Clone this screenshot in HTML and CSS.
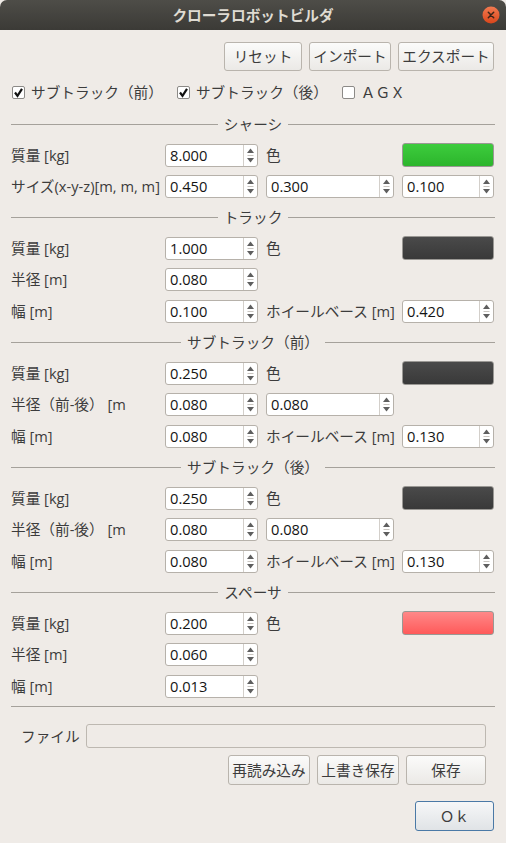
FILE: index.html
```html
<!DOCTYPE html>
<html lang="ja">
<head>
<meta charset="utf-8">
<title>クローラロボットビルダ</title>
<link rel="stylesheet" href="styles.css">
</head>
<body>
<div class="window">
  <div class="titlebar">
    <span></span>
    <span class="title">クローラロボットビルダ</span>
    <span class="close"><svg width="18" height="18" viewBox="0 0 18 18"><defs><linearGradient id="cg" x1="0" y1="0" x2="0" y2="1"><stop offset="0" stop-color="#f27a50"/><stop offset="1" stop-color="#d9461b"/></linearGradient></defs><circle cx="9" cy="9" r="8.5" fill="url(#cg)"/><path d="M6.3 6.3 L11.7 11.7 M11.7 6.3 L6.3 11.7" stroke="#3a2418" stroke-width="1.5" stroke-linecap="round"/></svg></span>
  </div>
  <div class="content">
    <div class="toolbar">
      <button class="btn b-reset">リセット</button>
      <button class="btn b-import">インポート</button>
      <button class="btn b-export">エクスポート</button>
    </div>
    <div class="checks">
      <label class="check"><span class="box"><svg width="11" height="11" viewBox="0 0 11 11"><path d="M2 5.5 L4.5 8.8 L9 1.8" fill="none" stroke="#111" stroke-width="2.2"/></svg></span>サブトラック（前）</label>
      <label class="check"><span class="box"><svg width="11" height="11" viewBox="0 0 11 11"><path d="M2 5.5 L4.5 8.8 L9 1.8" fill="none" stroke="#111" stroke-width="2.2"/></svg></span>サブトラック（後）</label>
      <label class="check"><span class="box"></span>ＡＧＸ</label>
    </div>

    <div class="form">
      <div class="sep"><span class="line"></span><span class="sep-title">シャーシ</span><span class="line"></span></div>
      <div class="row">
        <span class="lbl">質量 [kg]</span>
        <div class="spin"><span class="val">8.000</span><span class="arrows"><svg width="13" height="21" viewBox="0 0 13 21"><polygon points="3,8 10,8 6.5,3.5" fill="#5e5e5e"/><path d="M3.5 10.5 H9.5" stroke="#c9c5c0" stroke-width="1"/><polygon points="3,13 10,13 6.5,17.5" fill="#5e5e5e"/></svg></span></div>
        <span class="lbl">色</span>
        <div class="swatch green"></div>
      </div>
      <div class="row">
        <span class="lbl">サイズ(x-y-z)[m, m, m]</span>
        <div class="spin"><span class="val">0.450</span><span class="arrows"><svg width="13" height="21" viewBox="0 0 13 21"><polygon points="3,8 10,8 6.5,3.5" fill="#5e5e5e"/><path d="M3.5 10.5 H9.5" stroke="#c9c5c0" stroke-width="1"/><polygon points="3,13 10,13 6.5,17.5" fill="#5e5e5e"/></svg></span></div>
        <div class="spin"><span class="val">0.300</span><span class="arrows"><svg width="13" height="21" viewBox="0 0 13 21"><polygon points="3,8 10,8 6.5,3.5" fill="#5e5e5e"/><path d="M3.5 10.5 H9.5" stroke="#c9c5c0" stroke-width="1"/><polygon points="3,13 10,13 6.5,17.5" fill="#5e5e5e"/></svg></span></div>
        <div class="spin"><span class="val">0.100</span><span class="arrows"><svg width="13" height="21" viewBox="0 0 13 21"><polygon points="3,8 10,8 6.5,3.5" fill="#5e5e5e"/><path d="M3.5 10.5 H9.5" stroke="#c9c5c0" stroke-width="1"/><polygon points="3,13 10,13 6.5,17.5" fill="#5e5e5e"/></svg></span></div>
      </div>

      <div class="sep"><span class="line"></span><span class="sep-title">トラック</span><span class="line"></span></div>
      <div class="row">
        <span class="lbl">質量 [kg]</span>
        <div class="spin"><span class="val">1.000</span><span class="arrows"><svg width="13" height="21" viewBox="0 0 13 21"><polygon points="3,8 10,8 6.5,3.5" fill="#5e5e5e"/><path d="M3.5 10.5 H9.5" stroke="#c9c5c0" stroke-width="1"/><polygon points="3,13 10,13 6.5,17.5" fill="#5e5e5e"/></svg></span></div>
        <span class="lbl">色</span>
        <div class="swatch dark"></div>
      </div>
      <div class="row">
        <span class="lbl">半径 [m]</span>
        <div class="spin"><span class="val">0.080</span><span class="arrows"><svg width="13" height="21" viewBox="0 0 13 21"><polygon points="3,8 10,8 6.5,3.5" fill="#5e5e5e"/><path d="M3.5 10.5 H9.5" stroke="#c9c5c0" stroke-width="1"/><polygon points="3,13 10,13 6.5,17.5" fill="#5e5e5e"/></svg></span></div>
      </div>
      <div class="row">
        <span class="lbl">幅 [m]</span>
        <div class="spin"><span class="val">0.100</span><span class="arrows"><svg width="13" height="21" viewBox="0 0 13 21"><polygon points="3,8 10,8 6.5,3.5" fill="#5e5e5e"/><path d="M3.5 10.5 H9.5" stroke="#c9c5c0" stroke-width="1"/><polygon points="3,13 10,13 6.5,17.5" fill="#5e5e5e"/></svg></span></div>
        <span class="lbl">ホイールベース [m]</span>
        <div class="spin"><span class="val">0.420</span><span class="arrows"><svg width="13" height="21" viewBox="0 0 13 21"><polygon points="3,8 10,8 6.5,3.5" fill="#5e5e5e"/><path d="M3.5 10.5 H9.5" stroke="#c9c5c0" stroke-width="1"/><polygon points="3,13 10,13 6.5,17.5" fill="#5e5e5e"/></svg></span></div>
      </div>

      <div class="sep"><span class="line"></span><span class="sep-title">サブトラック（前）</span><span class="line"></span></div>
      <div class="row">
        <span class="lbl">質量 [kg]</span>
        <div class="spin"><span class="val">0.250</span><span class="arrows"><svg width="13" height="21" viewBox="0 0 13 21"><polygon points="3,8 10,8 6.5,3.5" fill="#5e5e5e"/><path d="M3.5 10.5 H9.5" stroke="#c9c5c0" stroke-width="1"/><polygon points="3,13 10,13 6.5,17.5" fill="#5e5e5e"/></svg></span></div>
        <span class="lbl">色</span>
        <div class="swatch dark"></div>
      </div>
      <div class="row">
        <span class="lbl">半径（前-後） [m</span>
        <div class="spin"><span class="val">0.080</span><span class="arrows"><svg width="13" height="21" viewBox="0 0 13 21"><polygon points="3,8 10,8 6.5,3.5" fill="#5e5e5e"/><path d="M3.5 10.5 H9.5" stroke="#c9c5c0" stroke-width="1"/><polygon points="3,13 10,13 6.5,17.5" fill="#5e5e5e"/></svg></span></div>
        <div class="spin"><span class="val">0.080</span><span class="arrows"><svg width="13" height="21" viewBox="0 0 13 21"><polygon points="3,8 10,8 6.5,3.5" fill="#5e5e5e"/><path d="M3.5 10.5 H9.5" stroke="#c9c5c0" stroke-width="1"/><polygon points="3,13 10,13 6.5,17.5" fill="#5e5e5e"/></svg></span></div>
      </div>
      <div class="row">
        <span class="lbl">幅 [m]</span>
        <div class="spin"><span class="val">0.080</span><span class="arrows"><svg width="13" height="21" viewBox="0 0 13 21"><polygon points="3,8 10,8 6.5,3.5" fill="#5e5e5e"/><path d="M3.5 10.5 H9.5" stroke="#c9c5c0" stroke-width="1"/><polygon points="3,13 10,13 6.5,17.5" fill="#5e5e5e"/></svg></span></div>
        <span class="lbl">ホイールベース [m]</span>
        <div class="spin"><span class="val">0.130</span><span class="arrows"><svg width="13" height="21" viewBox="0 0 13 21"><polygon points="3,8 10,8 6.5,3.5" fill="#5e5e5e"/><path d="M3.5 10.5 H9.5" stroke="#c9c5c0" stroke-width="1"/><polygon points="3,13 10,13 6.5,17.5" fill="#5e5e5e"/></svg></span></div>
      </div>

      <div class="sep"><span class="line"></span><span class="sep-title">サブトラック（後）</span><span class="line"></span></div>
      <div class="row">
        <span class="lbl">質量 [kg]</span>
        <div class="spin"><span class="val">0.250</span><span class="arrows"><svg width="13" height="21" viewBox="0 0 13 21"><polygon points="3,8 10,8 6.5,3.5" fill="#5e5e5e"/><path d="M3.5 10.5 H9.5" stroke="#c9c5c0" stroke-width="1"/><polygon points="3,13 10,13 6.5,17.5" fill="#5e5e5e"/></svg></span></div>
        <span class="lbl">色</span>
        <div class="swatch dark"></div>
      </div>
      <div class="row">
        <span class="lbl">半径（前-後） [m</span>
        <div class="spin"><span class="val">0.080</span><span class="arrows"><svg width="13" height="21" viewBox="0 0 13 21"><polygon points="3,8 10,8 6.5,3.5" fill="#5e5e5e"/><path d="M3.5 10.5 H9.5" stroke="#c9c5c0" stroke-width="1"/><polygon points="3,13 10,13 6.5,17.5" fill="#5e5e5e"/></svg></span></div>
        <div class="spin"><span class="val">0.080</span><span class="arrows"><svg width="13" height="21" viewBox="0 0 13 21"><polygon points="3,8 10,8 6.5,3.5" fill="#5e5e5e"/><path d="M3.5 10.5 H9.5" stroke="#c9c5c0" stroke-width="1"/><polygon points="3,13 10,13 6.5,17.5" fill="#5e5e5e"/></svg></span></div>
      </div>
      <div class="row">
        <span class="lbl">幅 [m]</span>
        <div class="spin"><span class="val">0.080</span><span class="arrows"><svg width="13" height="21" viewBox="0 0 13 21"><polygon points="3,8 10,8 6.5,3.5" fill="#5e5e5e"/><path d="M3.5 10.5 H9.5" stroke="#c9c5c0" stroke-width="1"/><polygon points="3,13 10,13 6.5,17.5" fill="#5e5e5e"/></svg></span></div>
        <span class="lbl">ホイールベース [m]</span>
        <div class="spin"><span class="val">0.130</span><span class="arrows"><svg width="13" height="21" viewBox="0 0 13 21"><polygon points="3,8 10,8 6.5,3.5" fill="#5e5e5e"/><path d="M3.5 10.5 H9.5" stroke="#c9c5c0" stroke-width="1"/><polygon points="3,13 10,13 6.5,17.5" fill="#5e5e5e"/></svg></span></div>
      </div>

      <div class="sep"><span class="line"></span><span class="sep-title">スペーサ</span><span class="line"></span></div>
      <div class="row">
        <span class="lbl">質量 [kg]</span>
        <div class="spin"><span class="val">0.200</span><span class="arrows"><svg width="13" height="21" viewBox="0 0 13 21"><polygon points="3,8 10,8 6.5,3.5" fill="#5e5e5e"/><path d="M3.5 10.5 H9.5" stroke="#c9c5c0" stroke-width="1"/><polygon points="3,13 10,13 6.5,17.5" fill="#5e5e5e"/></svg></span></div>
        <span class="lbl">色</span>
        <div class="swatch pink"></div>
      </div>
      <div class="row">
        <span class="lbl">半径 [m]</span>
        <div class="spin"><span class="val">0.060</span><span class="arrows"><svg width="13" height="21" viewBox="0 0 13 21"><polygon points="3,8 10,8 6.5,3.5" fill="#5e5e5e"/><path d="M3.5 10.5 H9.5" stroke="#c9c5c0" stroke-width="1"/><polygon points="3,13 10,13 6.5,17.5" fill="#5e5e5e"/></svg></span></div>
      </div>
      <div class="row">
        <span class="lbl">幅 [m]</span>
        <div class="spin"><span class="val">0.013</span><span class="arrows"><svg width="13" height="21" viewBox="0 0 13 21"><polygon points="3,8 10,8 6.5,3.5" fill="#5e5e5e"/><path d="M3.5 10.5 H9.5" stroke="#c9c5c0" stroke-width="1"/><polygon points="3,13 10,13 6.5,17.5" fill="#5e5e5e"/></svg></span></div>
      </div>
    </div>

    <div class="hline"></div>

    <div class="filerow">
      <span class="lbl">ファイル</span>
      <div class="fileinput"></div>
    </div>
    <div class="filebtns">
      <button class="btn b-file">再読み込み</button>
      <button class="btn b-file">上書き保存</button>
      <button class="btn b-save">保存</button>
    </div>
    <div class="okrow">
      <button class="btn ok">Ｏｋ</button>
    </div>
  </div>
</div>
</body>
</html>
```

FILE: styles.css
```css
* { box-sizing: border-box; }
html, body { margin: 0; padding: 0; }
body {
  width: 506px;
  height: 843px;
  overflow: hidden;
  background: #efebe7;
  font-family: "Open Sans", "Noto Sans CJK JP", sans-serif;
  font-size: 14.67px;
  color: #3c3c3c;
}
.window { width: 506px; height: 843px; background: #efebe7; }

.titlebar {
  height: 30px;
  background: linear-gradient(#4e4d48, #3b3a36);
  border-radius: 7px 7px 0 0;
  display: grid;
  grid-template-columns: 1fr auto 1fr;
  align-items: center;
}
.title {
  font-family: "Noto Sans CJK JP", sans-serif;
  font-weight: 700;
  color: #dfdbd2;
  font-size: 14.67px;
  line-height: 30px;
}
.close {
  justify-self: end;
  margin-right: 6px;
  width: 18px;
  height: 18px;
  display: flex;
}

.content { padding: 12px 11px 0 11px; }

.btn {
  font-family: "Open Sans", "Noto Sans CJK JP", sans-serif;
  font-size: 14.67px;
  color: #3c3c3c;
  background: linear-gradient(#fbfbfa, #ebe9e6);
  border: 1px solid #b9b4ad;
  border-radius: 3px;
  padding: 0;
  margin: 0;
  line-height: 1;
  display: flex;
  align-items: center;
  justify-content: center;
}

.toolbar {
  display: flex;
  justify-content: flex-end;
  gap: 7px;
  padding-right: 1px;
}
.toolbar .btn { height: 29px; }
.b-reset { width: 78px; }
.b-import { width: 82px; }
.b-export { width: 96px; }

.checks {
  display: flex;
  align-items: center;
  height: 14px;
  margin-top: 14px;
  padding-left: 1px;
}
.check {
  display: flex;
  align-items: center;
  gap: 6px;
  margin-right: 14px;
  white-space: nowrap;
  line-height: 14px;
}
.box {
  width: 13px;
  height: 13px;
  background: #fff;
  border: 1px solid #8c8a87;
  border-radius: 2px;
  display: flex;
  align-items: center;
  justify-content: center;
}

.form {
  display: flex;
  flex-direction: column;
  gap: 9px;
  margin-top: 15px;
}
.sep {
  height: 20px;
  display: flex;
  align-items: center;
  gap: 6px;
}
.sep .line { flex: 1; height: 1px; background: #a5a19b; }
.sep-title { line-height: 20px; white-space: nowrap; }

.row {
  display: grid;
  grid-template-columns: 146px 93px 128px 92px;
  column-gap: 8px;
  height: 23px;
  align-items: center;
}
.lbl { white-space: nowrap; line-height: 23px; }

.spin {
  height: 23px;
  display: flex;
  background: #fff;
  border: 1px solid #b6b1aa;
  border-radius: 3px;
}
.spin .val {
  flex: 1;
  padding-left: 4px;
  line-height: 21px;
  color: #141414;
}
.spin .arrows {
  width: 14px;
  border-left: 1px solid #d3cfca;
  display: flex;
}

.swatch {
  height: 24px;
  border: 1px solid #9a9894;
  border-radius: 3px;
}
.green { background: linear-gradient(#3dcc3d, #2cb52c); }
.dark { background: linear-gradient(#4a4a4a, #393939); }
.pink { background: linear-gradient(#ff8888, #ff5a5a); }

.hline {
  height: 1px;
  background: #a5a19b;
  margin-top: 8px;
}

.filerow {
  display: flex;
  align-items: center;
  gap: 6px;
  margin-top: 17px;
  padding-left: 10px;
  padding-right: 9px;
}
.fileinput {
  flex: 1;
  height: 24px;
  background: #efebe7;
  border: 1px solid #bdb8b1;
  border-radius: 3px;
}

.filebtns {
  display: flex;
  justify-content: flex-end;
  gap: 7px;
  margin-top: 7px;
  padding-right: 9px;
}
.filebtns .btn { height: 30px; }
.b-file { width: 82px; }
.b-save { width: 80px; }

.okrow {
  display: flex;
  justify-content: flex-end;
  margin-top: 16px;
  padding-right: 1px;
}
.ok {
  width: 79px;
  height: 30px;
  border-color: #4a79a6;
  background: linear-gradient(#f6f7f8, #e0e3e6);
}
```
